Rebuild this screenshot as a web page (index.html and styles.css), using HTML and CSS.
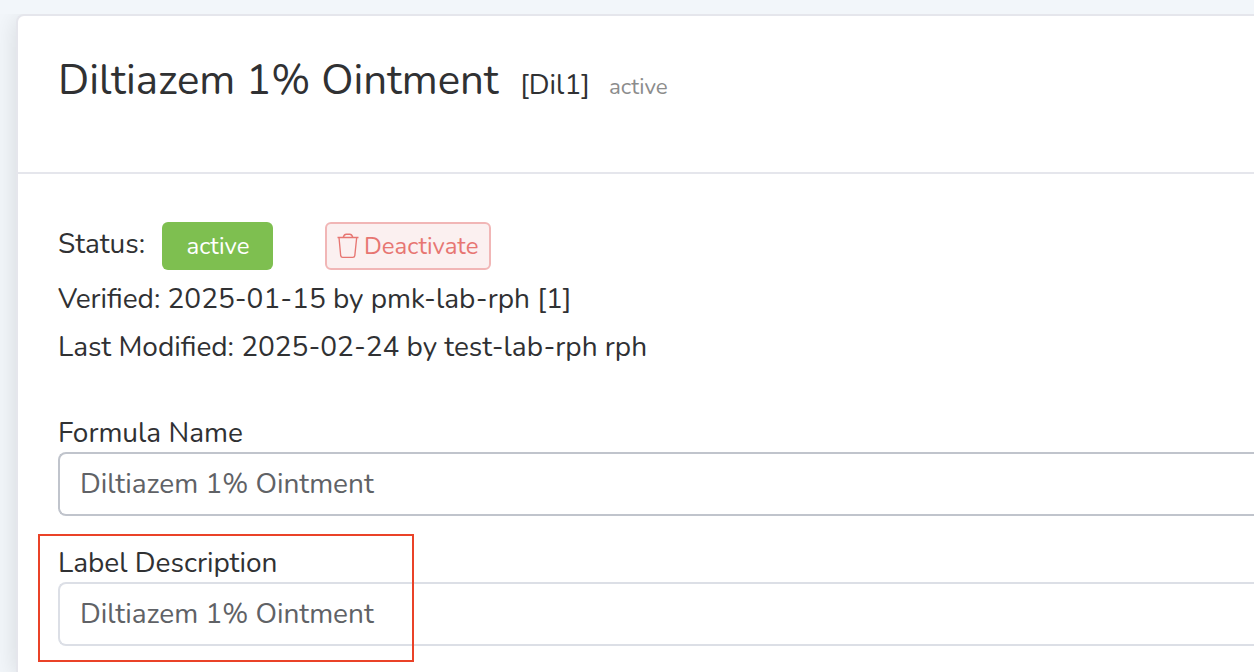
FILE: index.html
```html
<!DOCTYPE html>
<html lang="en">
<head>
<meta charset="utf-8">
<title>Diltiazem 1% Ointment</title>
<link rel="stylesheet" href="styles.css">
</head>
<body>
<div class="topbar"></div>
<main class="card">
  <header class="card-header">
    <h1 class="title">Diltiazem 1% Ointment</h1>
    <span class="code">[Dil1]</span>
    <span class="state">active</span>
  </header>
  <section class="card-body">
    <div class="status-row">
      <span class="status-label">Status:</span>
      <span class="badge">active</span>
      <button class="deactivate" type="button">
        <svg class="trash" viewBox="0 0 22 26" fill="none" stroke="currentColor" stroke-width="1.35" stroke-linejoin="round">
          <path d="M0.5 4.5H21.5M2 4.5L3.7 22.7Q3.9 24.4 5.6 24.4H15.9Q17.6 24.4 17.8 22.7L19.7 4.5M6.2 4.2Q7.2 1.2 9.2 1.2H12.8Q14.8 1.2 15.8 4.2"/>
        </svg>
        <span>Deactivate</span>
      </button>
    </div>
    <p class="meta">Verified: 2025-01-15 by pmk-lab-rph [1]</p>
    <p class="meta">Last Modified: 2025-02-24 by test-lab-rph rph</p>
    <div class="field field-name">
      <label class="label" for="name">Formula Name</label>
      <input class="input input-strong" id="name" value="Diltiazem 1% Ointment">
    </div>
    <div class="field field-description">
      <label class="label" for="description">Label Description</label>
      <input class="input" id="description" value="Diltiazem 1% Ointment">
      <div class="highlight"></div>
    </div>
  </section>
</main>
</body>
</html>
```
FILE: styles.css
```css
* { box-sizing: border-box; }
body {
  margin: 0;
  height: 672px;
  overflow: hidden;
  background: #f2f6fa;
  color: #303133;
  font-family: Nunito, Lato, "Open Sans", sans-serif;
  font-size: 28px;
}
.topbar { position: relative; z-index: 1; height: 14px; background: #f2f6fa; }
.card {
  height: 658px;
  margin-left: 16px;
  border: 2px solid #e5e6ec;
  border-right: 0;
  border-bottom: 0;
  border-radius: 8px 0 0 0;
  background: #fff;
  box-shadow: 0 4px 24px rgba(0, 0, 0, .12);
}
.card-header {
  display: flex;
  align-items: baseline;
  height: 158px;
  padding: 39px 40px 0;
  border-bottom: 2px solid #e5e6ec;
  white-space: nowrap;
}
.title { width: 462px; margin: 0; font-size: 42px; font-weight: 400; line-height: 52px; }
.code { width: 89px; }
.state { color: #8c8c8c; font-size: 22.4px; }
.card-body { padding: 48px 0 0 40px; }
.status-row { display: flex; height: 48px; align-items: center; }
.status-label { width: 104px; line-height: 44px; padding-bottom: 4px; }
.badge {
  width: 111px;
  height: 48px;
  padding-left: 1px;
  border-radius: 6px;
  background: #7ebf50;
  color: #fff;
  font-size: 24px;
  line-height: 48px;
  text-align: center;
}
.deactivate {
  display: flex;
  align-items: center;
  width: 166px;
  height: 48px;
  margin-left: 52px;
  padding: 0 0 0 10px;
  border: 2px solid #f1b6b6;
  border-radius: 6px;
  background: #fbf0f0;
  color: #e77672;
  font: inherit;
  font-size: 24px;
}
.trash { width: 22px; height: 26px; margin-right: 5px; }
.meta { margin: 0; height: 48px; line-height: 48px; white-space: nowrap; }
.status-row + .meta { margin-top: 5px; }
.field-name { margin-top: 37px; }
.field-description { position: relative; margin-top: 22px; }
.label { display: block; height: 44px; padding-top: 8px; line-height: 34px; }
.input {
  display: block;
  width: 100%;
  height: 64px;
  padding: 0 20px;
  border: 2px solid #dcdfe6;
  border-right: 0;
  border-radius: 8px 0 0 8px;
  background: #fff;
  color: #606266;
  font: inherit;
}
.input-strong { border-color: #c0c4cc; }
.highlight {
  position: absolute;
  top: -4px;
  left: -20px;
  width: 376px;
  height: 128px;
  border: 2px solid #ea4228;
}
```
